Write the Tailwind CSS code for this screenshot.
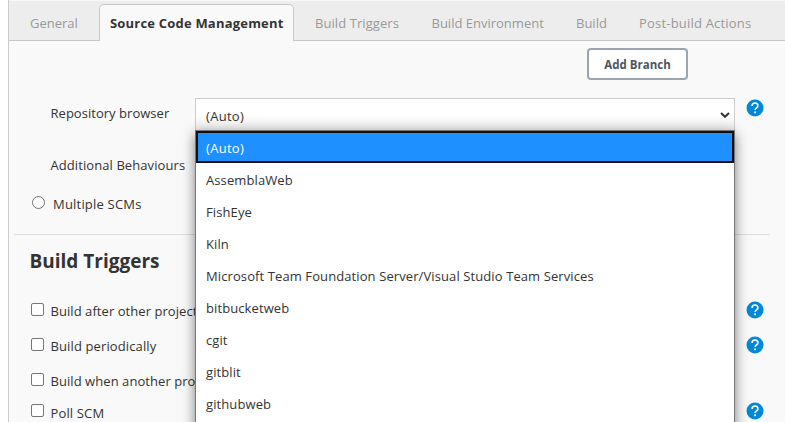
<!DOCTYPE html>
<html lang="en">
<head>
<meta charset="utf-8">
<title>Job configuration</title>
<script src="https://cdn.jsdelivr.net/npm/@tailwindcss/browser@4"></script>
</head>
<body class="h-[422px] overflow-hidden bg-white font-['Open_Sans','Noto_Sans',sans-serif] text-[13px] leading-[20px] text-[#333]">
<svg class="hidden"><symbol id="help" viewBox="0 0 18 18"><circle cx="9" cy="9" r="8.5" fill="#0288d8"/><path d="M6.1 6.9C6.1 5.2 7.3 4 9 4s2.9 1.1 2.9 2.7c0 2.1-2.8 2.2-2.8 4.4" fill="none" stroke="#fff" stroke-width="1.6"/><rect x="8.2" y="12.4" width="1.8" height="1.8" fill="#fff"/></symbol></svg>
<main class="relative ml-2 h-[422px] border-l border-[#ccc] bg-[#f9f9f9] pt-px">
  <nav class="flex h-10 items-end border-b border-[#c8c8c8] bg-[#ededed] whitespace-nowrap text-[#999]">
    <a class="w-[90px] pb-[7px] pl-[21px]">General</a>
    <a class="-mb-px h-[37px] w-[195px] rounded-t-[5px] border border-b-0 border-[#c8c8c8] bg-[#f9f9f9] pt-[8px] pl-[10px] font-bold tracking-[0.2px] text-[#333]">Source Code Management</a>
    <a class="w-[117px] pb-[7px] pl-[21px] tracking-[0.07px]">Build Triggers</a>
    <a class="w-[145px] pb-[7px] pl-[20.5px]">Build Environment</a>
    <a class="w-[63px] pb-[7px] pl-[20px]">Build</a>
    <a class="pb-[7px] pl-[20px] tracking-[0.2px]">Post-build Actions</a>
  </nav>
  <div class="flex h-[57px] pt-[7px] pl-[578px]">
    <button class="h-8 w-[101px] rounded-[4px] border-2 border-[#9aa5af] bg-white pt-px text-[11.5px] font-bold text-[#4d545d]">Add Branch</button>
  </div>
  <div class="flex h-[33px]">
    <label class="w-[186px] pt-[5px] pl-[41.5px] tracking-[0.03px]">Repository browser</label>
    <div class="flex h-[33px] w-[540px] items-center justify-between border border-[#ccc] bg-white bg-linear-to-b from-white from-50% to-[#ececec] pt-[3px] pr-[4px] pl-[10px]">
      <span class="tracking-[0.3px]">(Auto)</span>
      <svg class="mb-[3px] h-[6px] w-[10px]" viewBox="0 0 10 6"><path d="M1 1l4 3.8L9 1" fill="none" stroke="#333" stroke-width="2"/></svg>
    </div>
    <svg class="mt-px ml-[11px] h-[18px] w-[18px]"><use href="#help"/></svg>
  </div>
  <div class="h-[61px] pt-[24px] pl-[41.5px] tracking-[0.08px]">Additional Behaviours</div>
  <div class="flex h-[42px] pt-[2px] pl-[23px]">
    <span class="mt-[2px] mr-[8px] h-[13px] w-[13px] rounded-full border border-[#767676] bg-white"></span>
    <span class="tracking-[0.2px]">Multiple SCMs</span>
  </div>
  <hr class="mr-[15px] ml-[5px] border-[#ddd]">
  <h2 class="h-[66px] pt-[13px] pl-[20.5px] text-[19px] leading-[26px] font-bold">Build Triggers</h2>
  <div class="flex h-[35px] pl-[22px]"><span class="mt-[2px] mr-[6.5px] h-[13px] w-[13px] rounded-[2px] border border-[#767676] bg-white"></span><span class="w-[695.5px] tracking-[0.06px]">Build after other projects are built</span><svg class="h-[18px] w-[18px]"><use href="#help"/></svg></div>
  <div class="flex h-[35px] pl-[22px]"><span class="mt-[2px] mr-[6.5px] h-[13px] w-[13px] rounded-[2px] border border-[#767676] bg-white"></span><span class="w-[695.5px] tracking-[0.12px]">Build periodically</span><svg class="h-[18px] w-[18px]"><use href="#help"/></svg></div>
  <div class="flex h-[31px] pl-[22px]"><span class="mt-[2px] mr-[6.5px] h-[13px] w-[13px] rounded-[2px] border border-[#767676] bg-white"></span><span class="tracking-[0.06px]">Build when another project is promoted</span></div>
  <div class="flex h-[20px] pl-[22px]"><span class="mt-[2px] mr-[6.5px] h-[13px] w-[13px] rounded-[2px] border border-[#767676] bg-white"></span><span class="w-[695.5px] pt-px tracking-[0.15px]">Poll SCM</span><svg class="h-[18px] w-[18px]"><use href="#help"/></svg></div>

  <ul class="absolute top-[130px] left-[186px] h-[310px] w-[540px] border border-[#767676] bg-white leading-[34px] tracking-[0.1px] shadow-[0_4px_12px_rgba(0,0,0,0.5)]">
    <li class="h-8 border-2 border-[#101010] bg-[#1e90ff] pl-2 leading-[30px] tracking-[0.3px] text-white">(Auto)</li>
    <li class="h-8 pl-[10px]">AssemblaWeb</li>
    <li class="h-8 pl-[10px]">FishEye</li>
    <li class="h-8 pl-[10px]">Kiln</li>
    <li class="h-8 pl-[10px]">Microsoft Team Foundation Server/Visual Studio Team Services</li>
    <li class="h-8 pl-[10px]">bitbucketweb</li>
    <li class="h-8 pl-[10px]">cgit</li>
    <li class="h-8 pl-[10px]">gitblit</li>
    <li class="h-8 pl-[10px]">githubweb</li>
  </ul>
</main>
</body>
</html>
